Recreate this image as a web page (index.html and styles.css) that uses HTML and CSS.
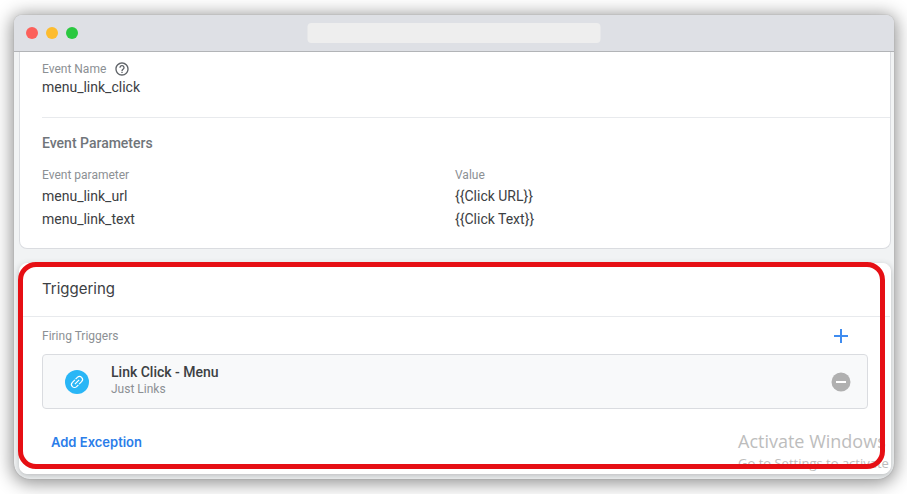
FILE: index.html
```html
<!DOCTYPE html>
<html lang="en">
<head>
    <meta charset="UTF-8">
    <meta name="viewport" content="width=device-width, initial-scale=1.0">
    <title>Tag - menu_link_click</title>
    <link rel="stylesheet" href="styles.css">
</head>
<body>
    <div class="window">
        <div class="title-bar">
            <span class="dot dot-close"></span>
            <span class="dot dot-minimize"></span>
            <span class="dot dot-expand"></span>
            <div class="address"></div>
        </div>

        <main class="content">
            <section class="card config">
                <div class="event-name">
                    <div class="label-row">
                        <span class="label">Event Name</span>
                        <svg class="help-icon" viewBox="0 0 24 24" aria-hidden="true">
                            <path d="M11 18h2v-2h-2v2zm1-16C6.48 2 2 6.48 2 12s4.48 10 10 10 10-4.48 10-10S17.52 2 12 2zm0 18c-4.410 0-8-3.590-8-8s3.590-8 8-8 8 3.590 8 8-3.590 8-8 8zm0-14c-2.210 0-4 1.790-4 4h2c0-1.100.9-2 2-2s2 .9 2 2c0 2-3 1.750-3 5h2c0-2.250 3-2.500 3-5 0-2.210-1.790-4-4-4z"/>
                        </svg>
                    </div>
                    <div class="value">menu_link_click</div>
                </div>
                <div class="parameters">
                    <h2 class="section-title">Event Parameters</h2>
                    <table class="param-table">
                        <thead>
                            <tr><th>Event parameter</th><th>Value</th></tr>
                        </thead>
                        <tbody>
                            <tr><td>menu_link_url</td><td>{{Click URL}}</td></tr>
                            <tr><td>menu_link_text</td><td>{{Click Text}}</td></tr>
                        </tbody>
                    </table>
                </div>
            </section>

            <section class="card triggering">
                <h1 class="card-title">Triggering</h1>
                <div class="triggers">
                    <div class="triggers-head">
                        <span class="label">Firing Triggers</span>
                        <button class="icon-button" type="button" aria-label="Add trigger">
                            <svg class="plus-icon" viewBox="0 0 14 14" aria-hidden="true">
                                <path d="M7 0v14M0 7h14"/>
                            </svg>
                        </button>
                    </div>
                    <div class="trigger">
                        <svg class="link-icon" viewBox="0 0 24 24" aria-hidden="true">
                            <circle cx="12" cy="12" r="12"/>
                            <g transform="rotate(-45 12 12)">
                                <path d="M11 15H8.500a3 3 0 0 1 0-6h3.500M13 9h2.500a3 3 0 0 1 0 6H12"/>
                                <path d="M9 12h6"/>
                            </g>
                        </svg>
                        <div class="trigger-text">
                            <div class="trigger-name">Link Click - Menu</div>
                            <div class="label">Just Links</div>
                        </div>
                        <button class="icon-button" type="button" aria-label="Remove trigger">
                            <svg class="remove-icon" viewBox="0 0 20 20" aria-hidden="true">
                                <circle cx="10" cy="10" r="9.500"/>
                                <path d="M5 10h10"/>
                            </svg>
                        </button>
                    </div>
                    <button class="add-exception" type="button">Add Exception</button>
                </div>
                <div class="watermark">
                    <div class="watermark-title">Activate Windows</div>
                    <div>Go to Settings to activate</div>
                </div>
                <div class="highlight"></div>
            </section>
        </main>
    </div>
</body>
</html>
```

FILE: styles.css
```css
* {
    box-sizing: border-box;
}
body {
    margin: 0;
    padding: 15px 13px 16px 14px;
    background-color: white;
    color: #3c4043;
    font-family: Roboto, Arial, sans-serif;
    font-size: 14px;
    overflow: hidden;
}
.window {
    background-color: #f1f3f4;
    border-radius: 8px 8px 16px 16px;
    box-shadow: 0 0 1px #888888, 0 2px 18px 2px rgba(0, 0, 0, 0.45);
    overflow: hidden;
}
.title-bar {
    display: flex;
    align-items: center;
    gap: 8px;
    height: 37px;
    padding: 0 12px;
    background-color: #dee0e5;
    border-bottom: 1px solid #b2b4b7;
    position: relative;
}
.dot {
    width: 12px;
    height: 12px;
    border-radius: 50%;
}
.dot-close {
    background-color: #fc605b;
}
.dot-minimize {
    background-color: #fdbc2e;
}
.dot-expand {
    background-color: #2ac840;
}
.address {
    position: absolute;
    left: 50%;
    transform: translateX(-50%);
    width: 33.3%;
    height: 20px;
    border-radius: 4px;
    background-color: #eeeeee;
}
.content {
    padding: 0 3px 5px 5px;
}
.card {
    background-color: white;
    border: 1px solid #dadce0;
    border-radius: 8px;
}

/* Tag configuration */
.config {
    border-top: none;
    border-radius: 0 0 8px 8px;
    padding: 8px 0 18px 22px;
}
.event-name {
    padding-bottom: 21px;
    border-bottom: 1px solid #e8eaed;
}
.label-row {
    display: flex;
    align-items: center;
    gap: 8px;
    height: 18px;
}
.label,
.param-table th {
    color: #8c9094;
    font-size: 12px;
    font-weight: 400;
    line-height: 16px;
}
.help-icon {
    width: 16px;
    height: 16px;
    fill: #5f6368;
}
.value {
    line-height: 18px;
}
.parameters {
    padding: 15px 22px 0 0;
}
.section-title {
    margin: 0 0 12px;
    color: #70757a;
    font-size: 14px;
    font-weight: 500;
    line-height: 20px;
}
.param-table {
    width: 100%;
    table-layout: fixed;
    border-collapse: collapse;
}
.param-table th,
.param-table td {
    padding: 0;
    text-align: left;
}
.param-table th {
    height: 19px;
}
.param-table td {
    height: 23px;
}

/* Triggering */
.triggering {
    position: relative;
    margin-top: 14px;
    border-color: white;
    box-shadow: 0 2px 6px rgba(60, 64, 67, 0.3);
}
.card-title {
    margin: 0;
    padding: 13px 22px 15px;
    border-bottom: 1px solid #e8eaed;
    font-family: Inter, Roboto, sans-serif;
    font-size: 15px;
    font-weight: 400;
    line-height: 24px;
}
.triggers {
    padding: 8px 22px 18px;
}
.triggers-head {
    display: flex;
    align-items: center;
    justify-content: space-between;
    height: 22px;
    margin-bottom: 7px;
    padding-right: 16px;
}
.icon-button {
    display: flex;
    align-items: center;
    justify-content: center;
    width: 22px;
    height: 22px;
    padding: 0;
    border: none;
    background: none;
    cursor: pointer;
}
.plus-icon {
    width: 14px;
    height: 14px;
    fill: none;
    stroke: #3f8cf0;
    stroke-width: 2;
}
.trigger {
    display: flex;
    align-items: center;
    height: 55px;
    padding: 0 15px 0 22px;
    background-color: #f8f9fa;
    border: 1px solid #dadce0;
    border-radius: 4px;
}
.link-icon {
    width: 24px;
    height: 24px;
    fill: #29b6f6;
}
.link-icon path {
    fill: none;
    stroke: white;
    stroke-width: 1.2;
}
.trigger-text {
    flex: 1;
    margin-left: 22px;
    padding-bottom: 3px;
}
.trigger-name {
    font-weight: 500;
    line-height: 18px;
}
.remove-icon {
    width: 20px;
    height: 20px;
    fill: #b0b0b0;
}
.remove-icon path {
    stroke: white;
    stroke-width: 2;
}
.add-exception {
    margin-top: 20px;
    padding: 0 9px;
    border: none;
    background: none;
    color: #2b7de9;
    font-family: Inter, Roboto, sans-serif;
    font-size: 13px;
    font-weight: 600;
    line-height: 26px;
    cursor: pointer;
}
.watermark {
    position: absolute;
    right: -4px;
    bottom: 0;
    width: 156px;
    color: #bdbdbd;
    font-family: "Open Sans", "Noto Sans", sans-serif;
    font-size: 13px;
    line-height: 20px;
    white-space: nowrap;
}
.watermark-title {
    font-size: 18px;
    line-height: 24px;
}
.highlight {
    position: absolute;
    top: -2px;
    right: 5px;
    bottom: 4px;
    left: -2px;
    border: 5px solid #e60f14;
    border-radius: 18px;
    pointer-events: none;
}
```
